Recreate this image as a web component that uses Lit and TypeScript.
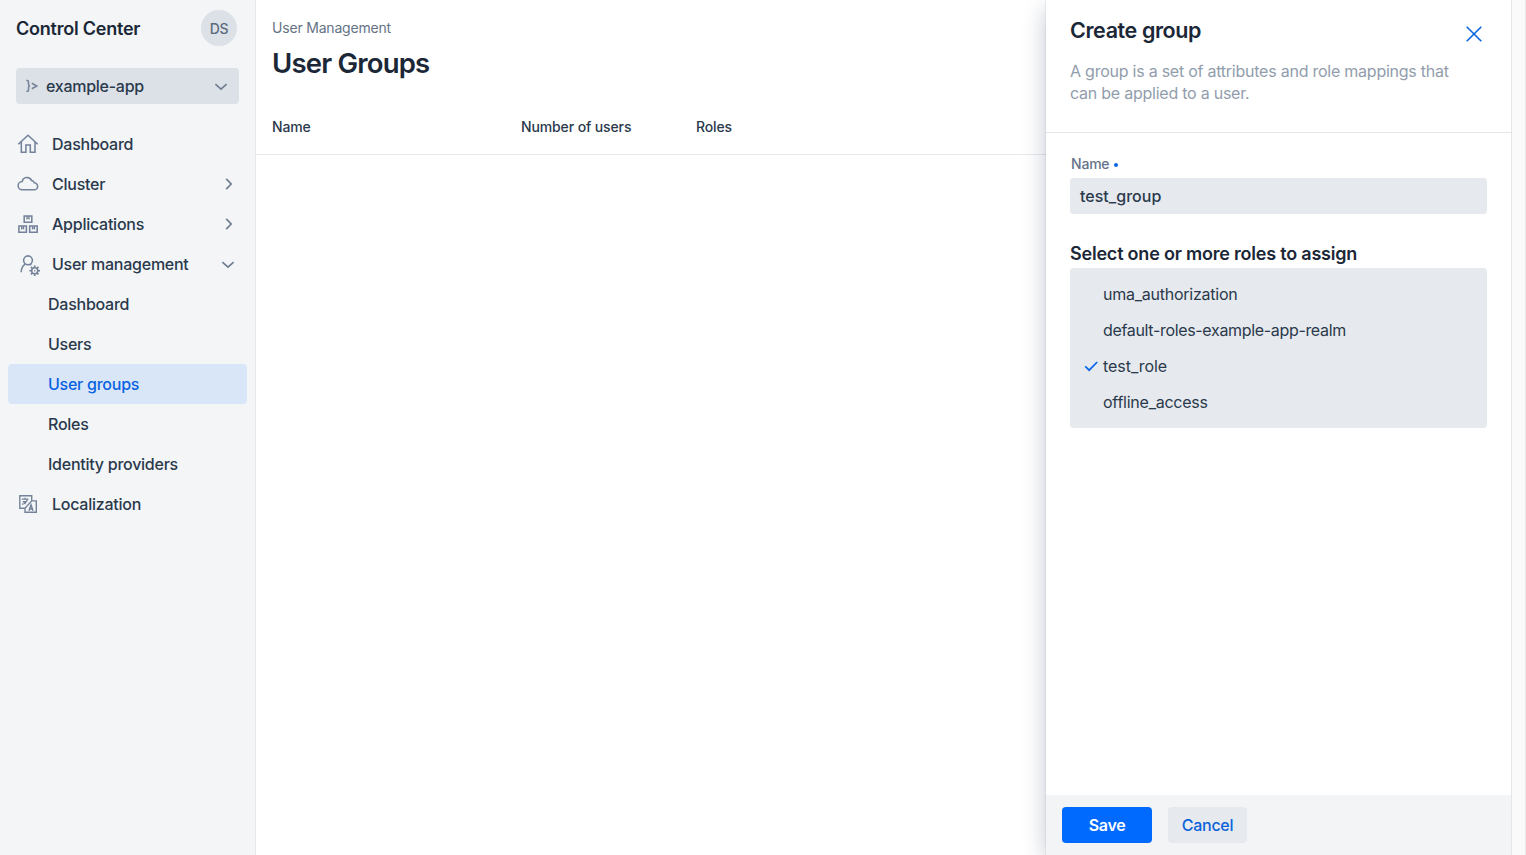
import { LitElement, html, css, svg, nothing, TemplateResult } from "lit";
import { customElement, property, state } from "lit/decorators.js";
import { classMap } from "lit/directives/class-map.js";

const chevronRight = html`<svg width="16" height="16" viewBox="0 0 16 16" fill="none" stroke="#6f7e91" stroke-width="1.7"><path d="M6.2 2.8 11.2 8 6.2 13.2" /></svg>`;
const chevronDown = html`<svg width="16" height="16" viewBox="0 0 16 16" fill="none" stroke="#6f7e91" stroke-width="1.7"><path d="M2.4 6.2 8 11.2 13.6 6.2" /></svg>`;

const gearTeeth = [0, 45, 90, 135, 180, 225, 270, 315].map(
  (a) => svg`<path transform="rotate(${a} 18.7 18.7)" d="M18.7 15.6V13.4" stroke-width="1.7"/>`
);

const icons: Record<string, TemplateResult> = {
  home: svg`<path d="M2.3 12.3 12 3.3 21.7 12.3M5.3 10V20.2H9.9V12.9H14.3V20.2H19V10"/>` as any,
  cloud: svg`<path d="M6.3 17.8H18A3.5 3.5 0 0 0 18.3 10.8A3.3 3.3 0 0 0 15.6 8.6A4.9 4.9 0 0 0 6.2 9.6A4.1 4.1 0 0 0 6.3 17.8Z"/>` as any,
  boxes: svg`<path d="M8.2 3.9H15.8V10.2H8.2ZM2.9 13.9H10.4V20.2H2.9ZM13.7 13.9H21.2V20.2H13.7Z"/><path d="M11 4V6.7L12 6.1L13 6.7V4M5.6 14V16.7L6.6 16.1L7.6 16.7V14M16.5 14V16.7L17.5 16.1L18.5 16.7V14" stroke-width="1.2"/>` as any,
  user: svg`<circle cx="12" cy="8.3" r="4.4"/><path d="M5.2 20.2C5.3 16.6 6.6 13.9 9.2 12.2M14.1 12.2 15.2 13"/><circle cx="18.7" cy="18.7" r="3" stroke-width="1.5"/><circle cx="18.7" cy="18.7" r=".8" fill="#74839a" stroke="none"/>${gearTeeth}` as any,
  language: svg`<path d="M9 16.2H3.8V3.8H15.7V8.9H20.3V20.2H9V16.2L15.7 8.9" stroke-width="1.4"/><path d="M5.8 7.2H12.4M8.9 5.8V7.2M11.4 7.4C10.8 9.8 8.7 11.5 6 12.3M6.8 9.6H11M7.6 9.6C8.2 10.8 9 11.6 9.8 12" stroke-width="1.3"/><path d="M13 18.8 15 12.9 17 18.8M13.8 17H16.3" stroke-width="1.5"/>` as any,
};

@customElement("nav-item")
class NavItem extends LitElement {
  @property() label = "";
  @property() icon = "";
  @property() arrow = "";
  @property({ type: Boolean }) child = false;
  @property({ type: Boolean }) current = false;

  static styles = css`
    :host { display: block; }
    .row {
      display: flex; align-items: center; height: 40px; box-sizing: border-box;
      margin: 0 8px; padding: 0 11px 0 8px; border-radius: 4px;
      font-size: 16px; font-weight: 500; letter-spacing: -0.25px; color: #2a394c;
    }
    .row.child { padding-left: 40px; }
    .row.current { background: #d9e6f8; color: #0862e2; }
    .icon { width: 24px; height: 24px; margin-right: 12px; stroke: #74839a; stroke-width: 1.55; fill: none; }
    .label { flex: 1; white-space: nowrap; }
    .arrow { display: flex; }
  `;

  render() {
    return html`<div class=${classMap({ row: true, child: this.child, current: this.current })}>
      ${this.icon ? html`<svg class="icon" viewBox="0 0 24 24">${icons[this.icon]}</svg>` : nothing}
      <span class="label">${this.label}</span>
      ${this.arrow ? html`<span class="arrow">${this.arrow === "down" ? chevronDown : chevronRight}</span>` : nothing}
    </div>`;
  }
}

@customElement("app-root")
class AppRoot extends LitElement {
  @state() roles = [
    { name: "uma_authorization", selected: false },
    { name: "default-roles-example-app-realm", selected: false },
    { name: "test_role", selected: true },
    { name: "offline_access", selected: false },
  ];

  static styles = css`
    :host {
      display: flex; position: relative; height: 100vh; overflow: hidden; background: #fff;
      font-family: Inter, "Liberation Sans", sans-serif; color: #1b2737;
    }
    .sidebar { width: 256px; box-sizing: border-box; background: #f3f5f7; border-right: 1px solid #e5e8ec; }
    .brand { display: flex; align-items: center; justify-content: space-between; height: 36px; padding: 10px 18px 0 16px; }
    .title { font-size: 18px; font-weight: 600; letter-spacing: -0.23px; }
    .avatar {
      display: flex; align-items: center; justify-content: center; width: 36px; height: 36px;
      border-radius: 50%; background: #dce1e8; color: #5c6a7c; font-size: 14px; font-weight: 500; letter-spacing: -0.2px;
    }
    .picker {
      display: flex; align-items: center; height: 36px; box-sizing: border-box; margin: 22px 16px 20px;
      padding: 0 10px; border-radius: 4px; background: #dce1e8;
    }
    .glyph { width: 12px; height: 16px; margin-right: 8px; }
    .app { flex: 1; font-size: 16px; font-weight: 500; letter-spacing: -0.27px; color: #2a394c; }
    .main { flex: 1; }
    .crumb { padding: 18px 16px 0; font-size: 14px; line-height: 20px; letter-spacing: -0.19px; color: #657386; }
    .heading { margin: 0; padding: 7px 16px 0; font-size: 27.5px; line-height: 36px; font-weight: 600; letter-spacing: -0.8px; }
    .columns {
      display: grid; grid-template-columns: 249px 175px 1fr; height: 54px; margin-top: 19px; padding-left: 16px;
      border-bottom: 1px solid #e5e8ec;
      font-size: 14px; line-height: 54px; font-weight: 500; letter-spacing: -0.12px; color: #2a394c;
    }
    .gutter { width: 13px; background: #fafafa; border: solid #e6e6e6; border-width: 0 1px; }
    .drawer {
      position: absolute; top: 0; bottom: 0; right: 15px; width: 465px; display: flex; flex-direction: column; background: #fff;
      box-shadow: 0 0 0 1px rgba(24, 38, 57, 0.05), 0 6px 24px -3px rgba(24, 38, 77, 0.33);
      clip-path: inset(0 0 0 -80px);
    }
    .head { display: flex; justify-content: space-between; height: 132px; padding: 0 24px; border-bottom: 1px solid #e3e7ec; }
    .head-title { margin: 0; padding-top: 17px; font-size: 21.5px; line-height: 27px; font-weight: 600; letter-spacing: -0.4px; }
    .desc { margin: 16px 0 0; font-size: 16px; line-height: 22px; letter-spacing: -0.24px; color: #919dac; white-space: nowrap; }
    .close { margin-top: 22px; }
    .body { flex: 1; padding: 22px 24px 0; }
    .field { display: flex; align-items: center; gap: 5px; padding-left: 1px; font-size: 14px; line-height: 18px; font-weight: 500; letter-spacing: -0.2px; color: #64738a; }
    .dot { width: 4px; height: 4px; margin-top: 1px; border-radius: 50%; background: #0a66e8; }
    .input {
      display: flex; align-items: center; height: 36px; margin-top: 5px; padding: 0 10px; border-radius: 3px;
      background: #e6e9ed; font-size: 16px; font-weight: 500; letter-spacing: 0.02px; color: #2a394c;
    }
    .sub { margin: 28px 0 0; font-size: 18px; line-height: 24px; font-weight: 600; letter-spacing: -0.21px; white-space: nowrap; }
    .list { margin-top: 2px; padding: 8px 14px; border-radius: 4px; background: #e6e9ed; }
    .role { display: flex; align-items: center; height: 36px; font-size: 16px; letter-spacing: -0.24px; color: #2a394c; }
    .role.long { letter-spacing: -0.33px; }
    .role.short { letter-spacing: -0.05px; }
    .check { display: flex; width: 19px; }
    .foot { display: flex; gap: 16px; height: 48px; padding: 12px 16px 0; background: #f3f4f6; }
    .btn {
      height: 36px; border: 0; border-radius: 4px; padding: 0; font-family: inherit; font-size: 16px; font-weight: 500; letter-spacing: -0.3px;
    }
    .save { width: 90px; background: #006aff; color: #fff; font-weight: 600; }
    .cancel { width: 79px; background: #e6eaee; color: #0b62da; }
  `;

  render() {
    return html`
      <aside class="sidebar">
        <div class="brand"><span class="title">Control Center</span><span class="avatar">DS</span></div>
        <div class="picker">
          <svg class="glyph" viewBox="0 0 12 16" fill="none" stroke="#77859a" stroke-width="1.6">
            <path d="M.3 2.5H1.3Q2.5 2.5 2.5 3.8V6.2Q2.5 7.8 4 8Q2.5 8.2 2.5 9.8V12.2Q2.5 13.3 1.3 13.3H.3M5.8 5.2 10.9 8 5.8 10.8" />
          </svg>
          <span class="app">example-app</span>${chevronDown}
        </div>
        <nav>
          <nav-item label="Dashboard" icon="home"></nav-item>
          <nav-item label="Cluster" icon="cloud" arrow="right"></nav-item>
          <nav-item label="Applications" icon="boxes" arrow="right"></nav-item>
          <nav-item label="User management" icon="user" arrow="down"></nav-item>
          <nav-item label="Dashboard" child></nav-item>
          <nav-item label="Users" child></nav-item>
          <nav-item label="User groups" child current></nav-item>
          <nav-item label="Roles" child></nav-item>
          <nav-item label="Identity providers" child></nav-item>
          <nav-item label="Localization" icon="language"></nav-item>
        </nav>
      </aside>
      <main class="main">
        <div class="crumb">User Management</div>
        <h1 class="heading">User Groups</h1>
        <div class="columns"><span>Name</span><span>Number of users</span><span>Roles</span></div>
      </main>
      <div class="gutter"></div>
      <section class="drawer">
        <header class="head">
          <div>
            <h2 class="head-title">Create group</h2>
            <p class="desc">A group is a set of attributes and role mappings that<br />can be applied to a user.</p>
          </div>
          <svg class="close" width="26" height="24" viewBox="0 0 26 24" fill="none" stroke="#0a66e0" stroke-width="1.6">
            <path d="M5.7 4.7 20.3 19.3M20.3 4.7 5.7 19.3" />
          </svg>
        </header>
        <div class="body">
          <div class="field"><span>Name</span><span class="dot"></span></div>
          <div class="input">test_group</div>
          <h3 class="sub">Select one or more roles to assign</h3>
          <div class="list">
            ${this.roles.map(
              (r) => html`<div class=${classMap({ role: true, long: r.name.length > 20, short: r.name.length < 10 })}>
                <span class="check">${r.selected
                  ? html`<svg width="14" height="14" viewBox="0 0 14 14" fill="none" stroke="#0a66e8" stroke-width="1.7"><path d="M1.2 7.4 5.2 11.2 13.2 3" /></svg>`
                  : nothing}</span>
                <span>${r.name}</span>
              </div>`
            )}
          </div>
        </div>
        <footer class="foot">
          <button class="btn save">Save</button>
          <button class="btn cancel">Cancel</button>
        </footer>
      </section>
    `;
  }
}
